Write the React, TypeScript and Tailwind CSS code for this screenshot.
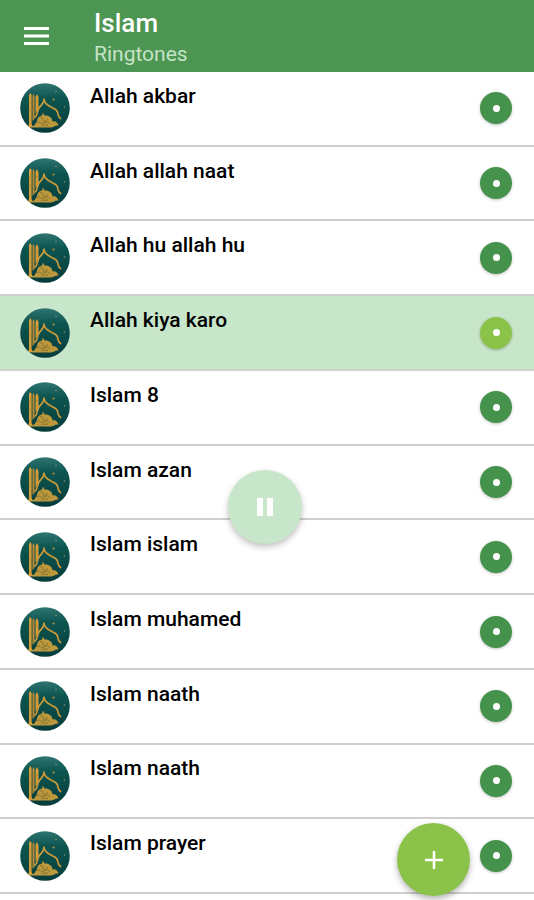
import { useState } from "react";

const ringtones = [
  "Allah akbar",
  "Allah allah naat",
  "Allah hu allah hu",
  "Allah kiya karo",
  "Islam 8",
  "Islam azan",
  "Islam islam",
  "Islam muhamed",
  "Islam naath",
  "Islam naath",
  "Islam prayer",
];

function MosqueGradient() {
  return (
    <svg className="absolute size-0" aria-hidden="true">
      <defs>
        <linearGradient id="night" x1="0" y1="0" x2="0" y2="1">
          <stop offset="0" stopColor="#2f7571" />
          <stop offset="0.3" stopColor="#0d5550" />
          <stop offset="1" stopColor="#063c3b" />
        </linearGradient>
      </defs>
    </svg>
  );
}

function MosqueIcon() {
  return (
    <svg viewBox="0 0 50 50" className="size-[50px] shrink-0" aria-hidden="true">
      <circle cx="25" cy="25" r="24.8" fill="url(#night)" />
      {/* minarets */}
      <path d="M9 12l1.300-2 1.300 2v29l1.400 3H8l1-3z" fill="#d59d38" />
      <path d="M12.500 13l1-2 1 2v23l-2 2z" fill="#b98a33" />
      <path d="M15.500 14l1.500-3 1.500 3v11l-3 6z" fill="#d59d38" />
      <path d="M8.500 20h4M8.500 28h4M15 19h4" stroke="#a67c31" strokeWidth="0.8" />
      {/* arch */}
      <path
        d="M15 34c3-2 2-6 4-9s5-4 5-9c0 4 3 6 7 8s6 2.500 6.500 5c.5 2.500 0 4 3 6.500"
        fill="none"
        stroke="#c99a3b"
        strokeWidth="1.7"
        strokeLinecap="round"
        strokeLinejoin="round"
      />
      {/* dome and ornament */}
      <path
        d="M17 38c0-3 2-5 5-5.500l1-3 1.500 3c4-.5 8 2 8 6 3-1 5 1 6 4-3-.5-5 2-8 2H10c2-2 4-1 5-3z"
        fill="#bd983d"
      />
      <path
        d="M20 35c2-1 3 0 3 2s3 2 5-1M17 40c3-3 4 2 7 0s4-1 6 1M21 43c2-2 4 0 7-1"
        fill="none"
        stroke="#756a2e"
        strokeWidth="0.8"
      />
      <circle cx="33.500" cy="16.500" r="1.100" fill="#b7913c" />
      <circle cx="36" cy="8.500" r="0.800" fill="#89916a" />
      <circle cx="44.500" cy="24" r="0.800" fill="#79977c" />
      <circle cx="25" cy="10" r="0.500" fill="#4f8873" />
    </svg>
  );
}

export default function App() {
  const [selected, setSelected] = useState(3);
  const [playing, setPlaying] = useState(true);

  return (
    <div className="flex min-h-screen flex-col bg-white pb-1.5 font-['Roboto',sans-serif] text-black">
      <MosqueGradient />
      <header className="flex h-[72px] shrink-0 items-center bg-[#4c9552] pl-6">
        <button type="button" aria-label="Open menu" className="cursor-pointer">
          <svg viewBox="0 0 25 18" className="h-[18px] w-[25px]">
            <path d="M0 1.5h25M0 9h25M0 16.5h25" stroke="#fff" strokeWidth="3" />
          </svg>
        </button>
        <div className="ml-[45px] pt-1">
          <h1 className="text-[26px] leading-[32px] font-medium text-white">Islam</h1>
          <p className="text-[21px] leading-[30px] text-[#c5e3c7]">Ringtones</p>
        </div>
      </header>

      <ul className="flex flex-1 flex-col">
        {ringtones.map((name, i) => (
          <li
            key={i}
            className={`flex min-h-[74px] flex-1 items-center border-b-2 border-[#cfcfcf] pr-[22px] pl-5 ${
              i === selected ? "bg-[#c8e6c9]" : "bg-white"
            }`}
          >
            <MosqueIcon />
            <button
              type="button"
              className="ml-5 flex-1 cursor-pointer self-stretch text-left"
              onClick={() => setSelected(i)}
            >
              <span className="block pb-[25px] text-[21px] leading-6 font-medium">{name}</span>
            </button>
            <button
              type="button"
              aria-label={`Options for ${name}`}
              className={`flex size-8 cursor-pointer items-center justify-center rounded-full shadow-[0_1px_3px_rgba(0,0,0,0.25)] ${
                i === selected ? "bg-[#8bc34a]" : "bg-[#45924c]"
              }`}
            >
              <span className="size-[7px] rounded-full bg-white" />
            </button>
          </li>
        ))}
      </ul>

      <button
        type="button"
        aria-label={playing ? "Pause" : "Play"}
        onClick={() => setPlaying(!playing)}
        className="fixed top-[470px] left-[calc(50%-39px)] flex size-[74px] cursor-pointer items-center justify-center rounded-full bg-[#c8e6c9] shadow-[0_3px_6px_rgba(0,0,0,0.25)]"
      >
        <svg viewBox="0 0 16 18" className="h-[18px] w-4" fill="#fff">
          {playing ? <path d="M0 0h6v18H0zM10 0h6v18h-6z" /> : <path d="M2 0l14 9-14 9z" />}
        </svg>
      </button>
      <button
        type="button"
        aria-label="Add ringtone"
        className="fixed right-16 bottom-1 flex size-[73px] cursor-pointer items-center justify-center rounded-full bg-[#8bc34a] shadow-[0_3px_6px_rgba(0,0,0,0.3)]"
      >
        <svg viewBox="0 0 18 18" className="size-[18px]">
          <path d="M9 0v18M0 9h18" stroke="#fff" strokeWidth="2.5" />
        </svg>
      </button>
    </div>
  );
}
